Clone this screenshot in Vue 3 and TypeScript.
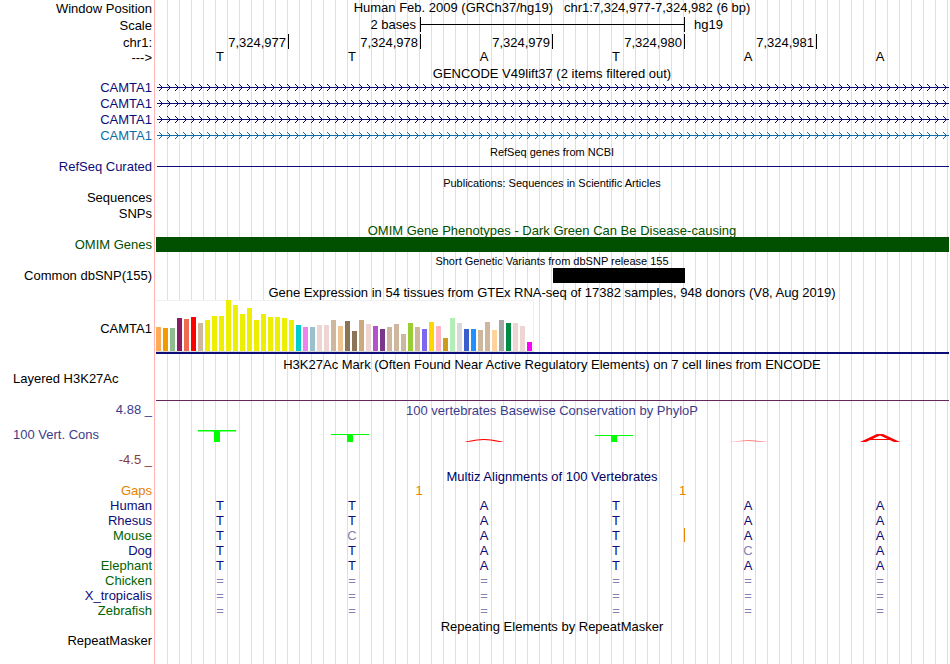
<script setup lang="ts">
interface Species { name: string; tone: string; bases: string; insertAfter?: number }
interface Tissue { color: string; height: number }

const ticks = ['7,324,977', '7,324,978', '7,324,979', '7,324,980', '7,324,981']
const sequence = 'TTATAA'
const geneTones = ['navy', 'navy', 'navy', 'blue']

const species: Species[] = [
  { name: 'Human', tone: 'navy', bases: 'TTATAA' },
  { name: 'Rhesus', tone: 'navy', bases: 'TTATAA' },
  { name: 'Mouse', tone: 'green', bases: 'TCATAA', insertAfter: 4 },
  { name: 'Dog', tone: 'navy', bases: 'TTATCA' },
  { name: 'Elephant', tone: 'green', bases: 'TTATAA' },
  { name: 'Chicken', tone: 'green', bases: '======' },
  { name: 'X_tropicalis', tone: 'navy', bases: '======' },
  { name: 'Zebrafish', tone: 'green', bases: '======' },
]

const gaps = ['', '1', '', '1', '', '']

const tissue = (color: string, ...heights: number[]): Tissue[] => heights.map((height) => ({ color, height }))
const tissues: Tissue[] = [
  ...tissue('#ffaa56', 24), ...tissue('#f29b00', 23), ...tissue('#8fbc8f', 23),
  ...tissue('#8b1c62', 33), ...tissue('#ee6a50', 32), ...tissue('#ff0000', 34),
  ...tissue('#cdb79e', 28),
  ...tissue('#eeee00', 31, 35, 35, 51, 46, 37, 43, 31, 37, 34, 34, 33, 31),
  ...tissue('#00cdcd', 26), ...tissue('#ee82ee', 24), ...tissue('#9ac0cd', 24),
  ...tissue('#eed5d2', 26, 26), ...tissue('#cdb79e', 31), ...tissue('#eec591', 25),
  ...tissue('#8b7355', 30, 20), ...tissue('#cdaa7d', 31), ...tissue('#eed5d2', 27),
  ...tissue('#b452cd', 25), ...tissue('#7a378b', 22), ...tissue('#cdb79e', 24, 27, 17),
  ...tissue('#9acd32', 28), ...tissue('#cdb79e', 24), ...tissue('#7b68ee', 22),
  ...tissue('#ffd700', 29), ...tissue('#ffb6c1', 25), ...tissue('#cd9b1d', 13),
  ...tissue('#b4eeb4', 33), ...tissue('#d9d9d9', 28), ...tissue('#3a5fcd', 22),
  ...tissue('#1e90ff', 22), ...tissue('#cdb79e', 21, 29), ...tissue('#ffd39b', 21),
  ...tissue('#a6a6a6', 31), ...tissue('#008b45', 28), ...tissue('#eed5d2', 28, 25),
  ...tissue('#ff00ff', 9),
]
</script>

<template>
  <main class="browser">
    <div class="row head">
      <span class="label">Window Position</span>
      <h1 class="position">Human Feb. 2009 (GRCh37/hg19)&nbsp;&nbsp; chr1:7,324,977-7,324,982 (6 bp)</h1>
    </div>
    <div class="row head">
      <span class="label">Scale</span>
      <div class="slots scale">
        <span class="scale-size">2 bases</span>
        <span class="scale-bar"></span>
        <span class="assembly">hg19</span>
      </div>
    </div>
    <div class="row ruler">
      <span class="label">chr1:</span>
      <div class="slots">
        <span v-for="t in ticks" :key="t" class="tick">{{ t }}</span>
      </div>
    </div>
    <div class="row head">
      <span class="label">---&gt;</span>
      <div class="bases">
        <span v-for="(b, i) in sequence" :key="i">{{ b }}</span>
      </div>
    </div>

    <section>
      <h2 class="title close">GENCODE V49lift37 (2 items filtered out)</h2>
      <div v-for="(tone, i) in geneTones" :key="i" class="row item" :class="tone">
        <span class="label">CAMTA1</span>
        <svg class="gene" aria-hidden="true">
          <defs>
            <pattern :id="'intron' + i" width="8" height="16" patternUnits="userSpaceOnUse">
              <path d="M2 5L5.5 8.5L2 12" fill="none" stroke="currentColor" stroke-width="1" />
            </pattern>
          </defs>
          <rect width="100%" height="16" :fill="'url(#intron' + i + ')'" />
          <rect y="8" width="100%" height="1" fill="currentColor" />
        </svg>
      </div>
    </section>

    <section>
      <h2 class="title small">RefSeq genes from NCBI</h2>
      <div class="row item navy">
        <span class="label">RefSeq Curated</span>
        <div class="thin-line"></div>
      </div>
    </section>

    <section>
      <h2 class="title small">Publications: Sequences in Scientific Articles</h2>
      <div class="row item"><span class="label">Sequences</span></div>
      <div class="row item"><span class="label">SNPs</span></div>
    </section>

    <section>
      <h2 class="title omim">OMIM Gene Phenotypes - Dark Green Can Be Disease-causing</h2>
      <div class="row item omim">
        <span class="label">OMIM Genes</span>
        <div class="omim-bar"></div>
      </div>
    </section>

    <section>
      <h2 class="title small">Short Genetic Variants from dbSNP release 155</h2>
      <div class="row item">
        <span class="label">Common dbSNP(155)</span>
        <div class="slots"><span class="variant"></span></div>
      </div>
    </section>

    <section>
      <h2 class="title">Gene Expression in 54 tissues from GTEx RNA-seq of 17382 samples, 948 donors (V8, Aug 2019)</h2>
      <div class="row gtex">
        <span class="label">CAMTA1</span>
        <div class="expression">
          <div class="bars">
            <span v-for="(t, i) in tissues" :key="i" :style="{ height: t.height + 'px', background: t.color }"></span>
          </div>
        </div>
      </div>
    </section>

    <section>
      <h2 class="title">H3K27Ac Mark (Often Found Near Active Regulatory Elements) on 7 cell lines from ENCODE</h2>
      <div class="row histone">
        <span class="label start">Layered H3K27Ac</span>
        <div class="baseline"></div>
      </div>
    </section>

    <section class="row conservation">
      <div class="axis">
        <span class="limit">4.88 _</span>
        <span class="name">100 Vert. Cons</span>
        <span class="limit low">-4.5 _</span>
      </div>
      <div>
        <h2 class="title inner">100 vertebrates Basewise Conservation by PhyloP</h2>
        <div class="bases logo">
          <svg viewBox="0 0 132 51"><path d="M44 14h38v1.4H66V26h-6V15.4H44z" fill="#0f0" /></svg>
          <svg viewBox="0 0 132 51"><path d="M45 18h38v1H67v7h-6v-7H45z" fill="#0f0" /></svg>
          <svg viewBox="0 0 132 51"><path d="M46 26Q58 23 66 23T86 26H81Q72 24 66 24T50 26z" fill="red" /></svg>
          <svg viewBox="0 0 132 51"><path d="M45 19h38v1H67v6h-6v-6H45z" fill="#0f0" /></svg>
          <svg viewBox="0 0 132 51"><path d="M46 26Q66 23 86 26Q66 24 46 26z" fill="red" /></svg>
          <svg viewBox="0 0 132 51">
            <path d="M46 26L63 18H69L86 26H80L66 19.5L52 26z" fill="red" />
            <path d="M56 23h20v1H56z" fill="red" />
          </svg>
        </div>
      </div>
    </section>

    <section>
      <h2 class="title multiz">Multiz Alignments of 100 Vertebrates</h2>
      <div class="row align gaps">
        <span class="label">Gaps</span>
        <div class="slots">
          <span v-for="(g, i) in gaps" :key="i" class="gap">{{ g }}</span>
        </div>
      </div>
      <div v-for="s in species" :key="s.name" class="row align">
        <span class="label" :class="s.tone">{{ s.name }}</span>
        <div class="bases navy">
          <span v-for="(b, i) in s.bases" :key="i" :class="{ mismatch: b === '=' || b === 'C' }">{{ b }}</span>
        </div>
        <div v-if="s.insertAfter" class="slots">
          <span v-for="n in 6" :key="n" :class="{ insert: n === s.insertAfter }"></span>
        </div>
      </div>
    </section>

    <section>
      <h2 class="title repeats">Repeating Elements by RepeatMasker</h2>
      <div class="row item last"><span class="label">RepeatMasker</span></div>
    </section>
  </main>
</template>

<style>
body {
  margin: 0;
  background: #fff;
}
</style>

<style scoped>
.browser {
  --gutter: 154px;
  box-sizing: border-box;
  min-height: 100vh;
  overflow: hidden;
  font: 13px/15px "Liberation Sans", Arial, sans-serif;
  color: #000;
  background:
    linear-gradient(#ffb4b4, #ffb4b4) 154px 0 / 1px 100% no-repeat,
    linear-gradient(90deg, #fff 157px, transparent 157px),
    linear-gradient(90deg, #dcdcf8 1px, transparent 1px) 11px 0 / 12px 100%;
}
.row {
  display: grid;
  grid-template-columns: var(--gutter) minmax(0, 1fr);
}
.row > * {
  grid-column: 2;
  grid-row: 1;
}
.row > .label,
.row > .axis {
  grid-column: 1;
}
.label {
  padding: 1px 2px 0 0;
  text-align: right;
  white-space: nowrap;
}
.label.start {
  padding-left: 13px;
  text-align: left;
}
.head {
  height: 17px;
}
.ruler {
  height: 15px;
}
.item {
  height: 16px;
}
.position {
  margin: 0;
  font: inherit;
  text-align: center;
}
.slots,
.bases {
  display: grid;
  grid-template-columns: repeat(6, minmax(0, 1fr));
}
.slots {
  padding: 0 1px 0 3px;
}
.bases {
  padding-right: 4px;
  text-align: center;
}
.scale-size {
  grid-column: span 2;
  height: 15px;
  padding-right: 4px;
  border-right: 1px solid #000;
  text-align: right;
}
.scale-bar {
  grid-column: span 2;
  height: 15px;
  border-right: 1px solid #000;
  background: linear-gradient(#000, #000) 0 7px / 100% 1px no-repeat;
}
.assembly {
  grid-column: span 2;
  padding-left: 9px;
}
.tick {
  padding: 1px 2px 0 0;
  height: 14px;
  border-right: 1px solid #000;
  text-align: right;
}

.title {
  display: flex;
  align-items: flex-end;
  justify-content: center;
  height: 15px;
  margin: 0 0 0 var(--gutter);
  font-size: 13px;
  font-weight: 400;
  line-height: 11px;
  white-space: nowrap;
}
.title.small {
  font-size: 11px;
  line-height: 12px;
}
.title.close {
  height: 13px;
}
.title.inner {
  margin-left: 0;
  color: #3c3c8c;
}
.title.multiz {
  padding-bottom: 1px;
  color: #000064;
}
.title.repeats {
  height: 14px;
}

.navy { color: #0c0c78; }
.blue { color: #0c6ca8; }
.green { color: #006400; }
.omim { color: #005000; }

.gene {
  width: calc(100% - 4px);
  height: 16px;
  margin-left: 3px;
}
.thin-line {
  height: 1px;
  margin: 8px 1px 0 3px;
  background: currentColor;
}
.omim-bar {
  height: 15px;
  margin: 1px 1px 0 2px;
  background: #005000;
}
.variant {
  grid-column: 4;
  height: 15px;
  margin-top: 1px;
  background: #000;
}

.gtex {
  height: 57px;
}
.gtex .label {
  padding-top: 23px;
}
.expression {
  height: 52px;
  margin: 2px 1px 0 2px;
  border-bottom: 2px solid #0c0c78;
}
.bars {
  box-sizing: border-box;
  display: flex;
  align-items: flex-end;
  gap: 2px;
  width: max-content;
  height: 52px;
  padding-right: 1px;
  border: solid #f0f0f0;
  border-width: 1px 1px 1px 0;
  border-bottom-color: #d8d8d8;
  background: #fff;
}
.bars span {
  width: 5px;
}

.histone {
  height: 31px;
}
.baseline {
  height: 1px;
  margin: 30px 1px 0 2px;
  background: #64285f;
}

.axis {
  display: flex;
  flex-direction: column;
  justify-content: space-between;
  height: 65px;
  padding-top: 1px;
  color: #3c3c8c;
}
.limit {
  padding-right: 2px;
  text-align: right;
}
.limit.low {
  color: #8c3c3c;
}
.name {
  padding-left: 13px;
}
.logo {
  height: 51px;
}
.logo svg {
  display: block;
  width: 100%;
  height: 51px;
}

.align {
  height: 15px;
}
.align .label {
  padding-top: 0;
}
.gaps {
  color: #e68200;
}
.gaps .slots {
  padding: 0 0 0 5px;
}
.gap {
  text-align: right;
}
.mismatch {
  color: #8282b4;
}
.insert {
  height: 14px;
  border-right: 1px solid #e68200;
}
.last {
  height: 32px;
}
</style>
